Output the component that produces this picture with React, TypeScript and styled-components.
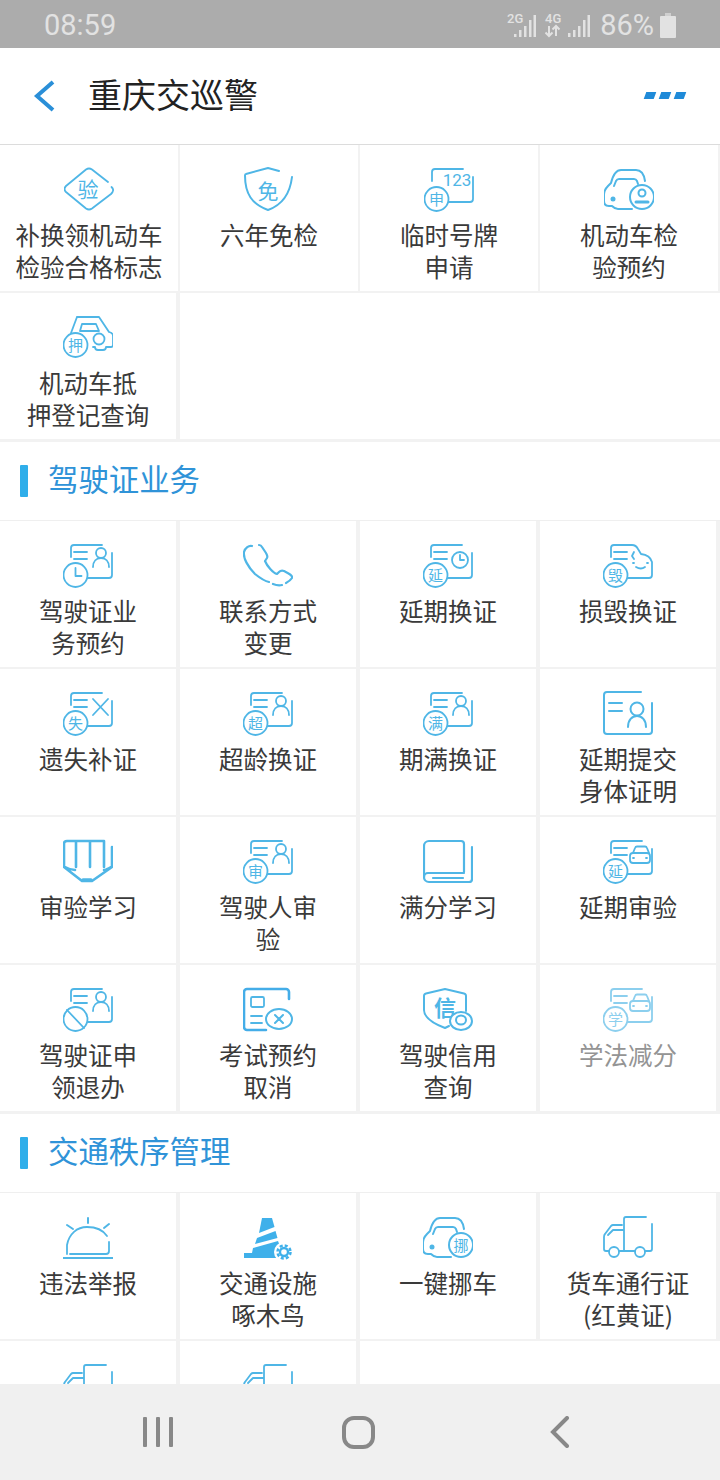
import React from "react";
import styled, { createGlobalStyle } from "styled-components";

const FONT = `"Noto Sans CJK SC", "Noto Sans", sans-serif`;

const GlobalStyle = createGlobalStyle`
  html, body {
    margin: 0;
    padding: 0;
    background: #fff;
  }
`;

const Page = styled.div`
  position: relative;
  width: 720px;
  height: 1480px;
  overflow: hidden;
  background: #fff;
  font-family: ${FONT};
`;

const StatusBar = styled.div`
  height: 48px;
  background: #acacac;
  color: #e2e2e2;
  font-family: Roboto, sans-serif;
  font-size: 29px;
  display: flex;
  align-items: center;
  justify-content: space-between;
  padding: 2px 44px 0;
  box-sizing: border-box;
`;

const StatusRight = styled.div`
  display: flex;
  align-items: center;
  gap: 6px;
`;

const Header = styled.div`
  height: 96px;
  display: flex;
  align-items: center;
  padding: 0 34px 0 33px;
  box-sizing: border-box;
`;

const Title = styled.div`
  flex: 1;
  margin: -4px 0 0 33px;
  font-size: 34px;
  line-height: 48px;
  color: #222;
`;

const Dots = styled.div`
  display: flex;
  gap: 5px;
  margin-right: 1px;
  margin-top: -2px;
`;

const Dot = styled.span`
  width: 10px;
  height: 7px;
  background: #1f8ad8;
  transform: skewX(-20deg);
`;

const Grid = styled.div<{ $lined?: boolean }>`
  display: grid;
  grid-template-columns: repeat(4, 180px);
  grid-auto-rows: 148px;
  border-top: 1px solid ${(p) => (p.$lined ? "#dcdcdc" : "#efefef")};
`;

const Tile = styled.div<{ $slim?: boolean }>`
  box-sizing: border-box;
  padding-top: 21px;
  border-right: ${(p) => (p.$slim ? "2px" : "4px")} solid #f2f2f2;
  border-bottom: 2px solid #f2f2f2;
  display: flex;
  flex-direction: column;
  align-items: center;
`;

const Blank = styled.div<{ $span: number }>`
  grid-column: span ${(p) => p.$span};
  border-bottom: 2px solid #f2f2f2;
`;

const Label = styled.div<{ $faded?: boolean }>`
  margin-top: 7px;
  font-size: 24.5px;
  line-height: 32px;
  text-align: center;
  white-space: pre-line;
  color: ${(p) => (p.$faded ? "#949494" : "#3a3a3a")};
`;

const Heading = styled.div`
  box-sizing: border-box;
  height: 79px;
  border-top: 1px solid #f2f2f2;
  display: flex;
  align-items: center;
  padding-left: 20px;
  gap: 20px;
`;

const HeadingBar = styled.span`
  width: 8px;
  height: 32px;
  border-radius: 1px;
  background: #2faeea;
`;

const HeadingText = styled.span`
  margin-top: -6px;
  font-size: 30.4px;
  line-height: 40px;
  color: #2f93d8;
`;

const Glyph = styled.svg.attrs({ viewBox: "0 0 50 46", width: 50, height: 46 })<{
  $faded?: boolean;
}>`
  display: block;
  fill: none;
  stroke: #4fb6e6;
  stroke-width: 1.8;
  stroke-linecap: round;
  stroke-linejoin: round;
  opacity: ${(p) => (p.$faded ? 0.65 : 1)};
  text {
    fill: #4fb6e6;
    stroke: none;
    font-family: ${FONT};
    text-anchor: middle;
  }
`;

const PlateNumber = styled.text`
  && {
    font-family: Roboto, sans-serif;
    font-size: 17px;
  }
`;

const NavBar = styled.div`
  position: absolute;
  left: 0;
  right: 0;
  bottom: 0;
  height: 96px;
  background: #f0f0f0;
  display: grid;
  grid-template-columns: repeat(3, 201px);
  padding-left: 57px;
  align-items: center;
  justify-items: center;
`;

const Badge = ({ t, x = 12.5, y = 33 }: { t?: string; x?: number; y?: number }) => (
  <>
    <circle cx={x} cy={y} r={12} fill="#fff" />
    {t && (
      <text x={x} y={y + 5.5} fontSize={15}>
        {t}
      </text>
    )}
  </>
);

const CardBack = ({ lines = true }: { lines?: boolean }) => (
  <>
    <path d="M39 3H11a3 3 0 0 0-3 3v9M49 11v22a3 3 0 0 1-3 3H24" />
    {lines && <path d="M11 10h13M11 17h13" />}
  </>
);

const Person = () => (
  <>
    <circle cx={38} cy={11} r={5} />
    <path d="M30 25c0-6 3.5-9 8-9s8 3 8 9" />
  </>
);

const CardCar = () => (
  <>
    <path d="M30 15l2-5q.5-1.5 2-1.5h8q1.5 0 2 1.5l2 5" />
    <rect x={27} y={15} width={20} height={10} rx={3} />
    <path d="M30 20h1M43 20h1" />
  </>
);

const Truck = () => (
  <>
    <path d="M43 3H23q-2 0-2 2v32M19 11H10q-1 0-2 1L2 20q-1 1-1 3v12q0 2 2 2h3M5 21l5-5h11M16 37h16M42 37h5q2 0 2-2V10" />
    <circle cx={11} cy={38} r={5} />
    <circle cx={37} cy={38} r={5} />
  </>
);

const CarShell = () => (
  <g strokeWidth={2}>
    <path d="M41 15c-1-7-4-11-9-11H17c-5 0-8 5-10 13l-3 3q-4 4-4 9v6q0 5 5 5h3q3 3 6 3h14" />
    <path d="M10 20l2-5q1-2 3-2h15q2 0 3 2l1 3" />
    <circle cx={9} cy={33} r={2.5} fill="#4fb6e6" stroke="none" />
  </g>
);

const icons: Record<string, React.ReactNode> = {
  yan: (
    <>
      <path d="M44 16L28 3.5q-3-2-6 0L2 20q-3 3 0 6l20 16.5q3 2 6 0L47 28q4-4 .5-7" />
      <text x={24} y={31} fontSize={21}>验</text>
    </>
  ),
  mian: (
    <>
      <path d="M35 5L24 2 2 8q-1 0-1 1.5C1 28 8 38 24 44 38 39 46 28 48 11" strokeWidth={2} />
      <text x={24} y={33} fontSize={21}>免</text>
    </>
  ),
  linshi: (
    <>
      <CardBack lines={false} />
      <PlateNumber x={33} y={20}>123</PlateNumber>
      <Badge t="申" />
    </>
  ),
  carPerson: (
    <>
      <CarShell />
      <circle cx={38} cy={31} r={12} fill="#fff" strokeWidth={2} />
      <circle cx={38} cy={27} r={3.5} strokeWidth={2} />
      <path d="M32 36h12" strokeWidth={3} />
    </>
  ),
  yaCar: (
    <>
      <path d="M14 3h22l10 15q4 1 4 4v9q0 2-2 2h-5q0 3-3 3h-5q-3 0-3-3h-2M14 3L8 19" />
      <path d="M19 10h14l3 7H17z" />
      <circle cx={36} cy={25} r={5.5} />
      <Badge t="押" y={31} />
    </>
  ),
  clockCard: (
    <>
      <CardBack />
      <Person />
      <Badge y={33} />
      <path d="M12.5 26v8h6" />
    </>
  ),
  phone: (
    <path
      d="M9 4c-3-1-7 2-8 6-1 6 4 15 11 22 5 4 9 7 14 8M30 42q5 2 9 1M43 41q4-2 6-5c1-3-4-5-8-7q-3-1-5 1l-2 2c-4-1-10-8-12-13l2-3c1-2 0-3-1-5l-4-6q-1-2-3-2"
      strokeWidth={2.2}
    />
  ),
  yanClock: (
    <>
      <CardBack />
      <circle cx={37} cy={18} r={8} />
      <path d="M37 13v5h4" />
      <Badge t="延" />
    </>
  ),
  hui: (
    <>
      <path d="M29 3H11a3 3 0 0 0-3 3v9M29 3q4 0 6 4l3 5q9 1 11 8v13a3 3 0 0 1-3 3H24M11 10h13M11 17h13" />
      <path d="M31 10l-2 4 2 3M33 25q5 3 9 0M30 21h1M44 21h1" />
      <Badge t="毁" />
    </>
  ),
  shi: (
    <>
      <CardBack />
      <path d="M30 9l15 16M45 9L30 25" />
      <Badge t="失" />
    </>
  ),
  chao: (
    <>
      <CardBack />
      <Person />
      <Badge t="超" />
    </>
  ),
  man: (
    <>
      <CardBack />
      <Person />
      <Badge t="满" />
    </>
  ),
  person: (
    <g strokeWidth={2}>
      <path d="M38 2H4a3 3 0 0 0-3 3v36a3 3 0 0 0 3 3h42a3 3 0 0 0 3-3V13" />
      <path d="M6 13h13M6 21h13" />
      <circle cx={34} cy={19} r={6.5} />
      <path d="M25 37c0-7 4-11 9-11s9 4 9 11" />
    </g>
  ),
  study: (
    <g strokeWidth={2.6}>
      <path d="M41 3H4Q1 3 1 6v23l18 14h10l20-14V9M13 3v26M27 3v26M41 3v26M2 29q5 3 10 3M48 29q-5 3-7 3" />
      <path d="M20 42h8" strokeWidth={3.5} />
    </g>
  ),
  shenCard: (
    <>
      <CardBack />
      <Person />
      <Badge t="审" />
    </>
  ),
  book: (
    <g strokeWidth={2.2}>
      <path d="M41 34V6a3 3 0 0 0-3-3H6a5 5 0 0 0-5 5v31a5 5 0 0 0 5 5h40a3 3 0 0 0 3-3V9" />
      <path d="M1 39a4 4 0 0 1 4-4h36M10 40h30" />
    </g>
  ),
  yanCar: (
    <>
      <CardBack />
      <CardCar />
      <Badge t="延" />
    </>
  ),
  ban: (
    <>
      <CardBack />
      <Person />
      <Badge />
      <path d="M4 24l17 18" />
    </>
  ),
  examCancel: (
    <>
      <path d="M46 13V6a3 3 0 0 0-3-3H4a3 3 0 0 0-3 3v35a3 3 0 0 0 3 3h19" strokeWidth={2.6} stroke="#44ade8" />
      <rect x={8} y={11} width={13} height={10} rx={1.5} />
      <path d="M8 30h11M8 37h11" />
      <ellipse cx={36} cy={33} rx={13} ry={10} strokeWidth={2} />
      <path d="M32 29l8 8M40 29l-8 8" strokeWidth={2} />
    </>
  ),
  xin: (
    <>
      <path d="M1 10q0-2 2-2.5L22 3l19 4.5q2 .5 2 2.5v15M1 10v14q0 10 21 18l4-2" strokeWidth={2} />
      <text x={22} y={30} fontSize={22} fontWeight={700}>信</text>
      <ellipse cx={38} cy={35} rx={11} ry={9} fill="#fff" strokeWidth={2} />
      <ellipse cx={38} cy={34} rx={5} ry={4.5} strokeWidth={2} />
    </>
  ),
  xue: (
    <>
      <CardBack />
      <CardCar />
      <Badge t="学" />
    </>
  ),
  alarm: (
    <>
      <path d="M4 40V31c2-11 10-18 20-18 9 0 16 3 20 9M46 28v9q0 3-3 3H7" />
      <path d="M0 44h50" strokeWidth={2.2} />
      <path d="M25 4v5M4 11l6 4M46 10l-5 4" strokeWidth={2} />
    </>
  ),
  cone: (
    <>
      <g fill="#3fb0ea" stroke="none">
        <path d="M19 4h10l2.5 9L16 19z" />
        <path d="M14 24l18.5-7 2 7L12 30z" />
        <path d="M10 34l25-7 1.5 4L34 39v5H1v-5h8z" />
      </g>
      <circle cx={41} cy={38} r={10} fill="#fff" stroke="none" />
      <circle cx={41} cy={38} r={4} stroke="#3fb0ea" strokeWidth={2.4} />
      <circle cx={41} cy={38} r={6.5} stroke="#3fb0ea" strokeWidth={2.5} strokeDasharray="3 2.1" strokeLinecap="butt" />
    </>
  ),
  nuo: (
    <>
      <CarShell />
      <circle cx={38} cy={31} r={12} fill="#fff" strokeWidth={2} />
      <text x={38} y={37} fontSize={15}>挪</text>
    </>
  ),
  truck: <Truck />,
};

type Item = { icon: string; text: string; faded?: boolean };

const vehicleTop: Item[] = [
  { icon: "yan", text: "补换领机动车\n检验合格标志" },
  { icon: "mian", text: "六年免检" },
  { icon: "linshi", text: "临时号牌\n申请" },
  { icon: "carPerson", text: "机动车检\n验预约" },
];

const licence: Item[] = [
  { icon: "clockCard", text: "驾驶证业\n务预约" },
  { icon: "phone", text: "联系方式\n变更" },
  { icon: "yanClock", text: "延期换证" },
  { icon: "hui", text: "损毁换证" },
  { icon: "shi", text: "遗失补证" },
  { icon: "chao", text: "超龄换证" },
  { icon: "man", text: "期满换证" },
  { icon: "person", text: "延期提交\n身体证明" },
  { icon: "study", text: "审验学习" },
  { icon: "shenCard", text: "驾驶人审\n验" },
  { icon: "book", text: "满分学习" },
  { icon: "yanCar", text: "延期审验" },
  { icon: "ban", text: "驾驶证申\n领退办" },
  { icon: "examCancel", text: "考试预约\n取消" },
  { icon: "xin", text: "驾驶信用\n查询" },
  { icon: "xue", text: "学法减分", faded: true },
];

const traffic: Item[] = [
  { icon: "alarm", text: "违法举报" },
  { icon: "cone", text: "交通设施\n啄木鸟" },
  { icon: "nuo", text: "一键挪车" },
  { icon: "truck", text: "货车通行证\n(红黄证)" },
  { icon: "truck", text: "" },
  { icon: "truck", text: "" },
];

const ServiceTile = ({ item, slim }: { item: Item; slim?: boolean }) => (
  <Tile $slim={slim}>
    <Glyph $faded={item.faded}>{icons[item.icon]}</Glyph>
    <Label $faded={item.faded}>{item.text}</Label>
  </Tile>
);

const SignalIcons = () => (
  <svg width="87" height="28" viewBox="0 0 87 28" fill="#e2e2e2">
    <text x="0" y="12" fontSize="13" fontWeight="500" fontFamily="Roboto, sans-serif">2G</text>
    <path d="M7 23h2.5v3H7zM12 19h2.5v7H12zM17 15h2.5v11H17zM22 9h2.5v17H22zM26.5 4H29v22h-2.5z" />
    <text x="38" y="12" fontSize="13" fontWeight="500" fontFamily="Roboto, sans-serif">4G</text>
    <path d="M42 15v10m-3.5-3.5L42 25l3.5-3.5M49 25V15m-3.5 3.5L49 15l3.5 3.5" stroke="#e2e2e2" strokeWidth="2" fill="none" />
    <path d="M61 22h2.5v4H61zM66 19h2.5v7H66zM71 15h2.5v11H71zM76 9h2.5v17H76zM80.5 4H83v22h-2.5z" />
  </svg>
);

export default function App() {
  return (
    <Page>
      <GlobalStyle />
      <StatusBar>
        <span>08:59</span>
        <StatusRight>
          <SignalIcons />
          <span>86%</span>
          <svg width="16" height="25" viewBox="0 0 16 25" fill="#e2e2e2">
            <path d="M5 0h6v3H5z" fill="#cfcfcf" />
            <path d="M1 3h14a1 1 0 0 1 1 1v20a1 1 0 0 1-1 1H1a1 1 0 0 1-1-1V4a1 1 0 0 1 1-1z" />
          </svg>
        </StatusRight>
      </StatusBar>
      <Header>
        <svg width="22" height="32" viewBox="0 0 22 32" fill="none" stroke="#2a8fd8" strokeWidth="4">
          <path d="M20 2L4 16l16 14" />
        </svg>
        <Title>重庆交巡警</Title>
        <Dots>
          <Dot />
          <Dot />
          <Dot />
        </Dots>
      </Header>
      <Grid $lined>
        {vehicleTop.map((item) => (
          <ServiceTile key={item.text} item={item} slim />
        ))}
        <ServiceTile item={{ icon: "yaCar", text: "机动车抵\n押登记查询" }} />
        <Blank $span={3} />
      </Grid>
      <Heading>
        <HeadingBar />
        <HeadingText>驾驶证业务</HeadingText>
      </Heading>
      <Grid>
        {licence.map((item) => (
          <ServiceTile key={item.text} item={item} />
        ))}
      </Grid>
      <Heading>
        <HeadingBar />
        <HeadingText>交通秩序管理</HeadingText>
      </Heading>
      <Grid>
        {traffic.map((item, i) => (
          <ServiceTile key={i} item={item} />
        ))}
      </Grid>
      <NavBar>
        <svg width="30" height="30" viewBox="0 0 30 30" fill="#888">
          <rect x="0" y="0" width="4" height="30" rx="1" />
          <rect x="13" y="0" width="4" height="30" rx="1" />
          <rect x="26" y="0" width="4" height="30" rx="1" />
        </svg>
        <svg width="33" height="33" viewBox="0 0 33 33" fill="none" stroke="#888" strokeWidth="4">
          <rect x="2" y="2" width="29" height="29" rx="10" />
        </svg>
        <svg width="20" height="32" viewBox="0 0 20 32" fill="none" stroke="#888" strokeWidth="4" strokeLinecap="round">
          <path d="M17 2L3 16l14 14" />
        </svg>
      </NavBar>
    </Page>
  );
}
